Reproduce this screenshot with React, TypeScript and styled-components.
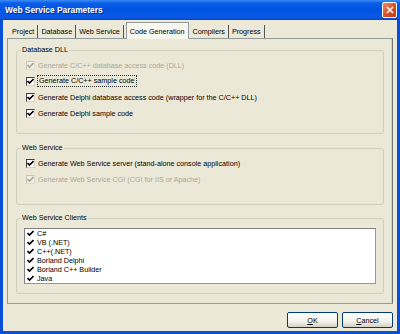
import React from "react";
import styled, { createGlobalStyle } from "styled-components";

const GlobalStyle = createGlobalStyle`
  html, body {
    margin: 0;
    padding: 0;
    background: #ece9d8;
  }
  body {
    font-family: "Liberation Sans", Arial, sans-serif;
    font-size: 7.2px;
    color: #000;
  }
`;

const Window = styled.div`
  width: 400px;
  height: 334px;
  display: flex;
  flex-direction: column;
  background: #0a4fd8;
  overflow: hidden;
`;

const TitleBar = styled.div`
  height: 20px;
  flex: none;
  display: flex;
  align-items: center;
  justify-content: space-between;
  padding: 0 3px 0 5px;
  background: linear-gradient(#3d8cf6 0%, #0b5ee8 15%, #0053e0 50%, #0a5ae6 85%, #0846c6 100%);
`;

const Title = styled.span`
  color: #fff;
  font-weight: bold;
  font-size: 8.4px;
  text-shadow: 1px 1px 0 #0a2a80;
`;

const CloseButton = styled.div`
  width: 13px;
  height: 14px;
  border: 1px solid #fff;
  border-radius: 2px;
  background: linear-gradient(135deg, #e88a6c, #d9491f 60%, #c23a16);
  display: flex;
  align-items: center;
  justify-content: center;
`;

const Body = styled.div`
  flex: 1;
  margin: 0 3px 3px 3px;
  background: #ece9d8;
  display: flex;
  flex-direction: column;
  padding: 3px 4px 0 4px;
`;

const TabStrip = styled.div`
  display: flex;
  align-items: flex-end;
  height: 15px;
  padding-left: 2px;
`;

const Tab = styled.div<{ $active?: boolean }>`
  height: ${(p) => (p.$active ? "16px" : "13px")};
  padding: 0 3px;
  display: flex;
  align-items: center;
  white-space: nowrap;
  background: ${(p) => (p.$active ? "#f7f6ef" : "#ece9d8")};
  border: ${(p) => (p.$active ? "1px solid #919b9c" : "none")};
  border-bottom: none;
  border-right: ${(p) => (p.$active ? "1px solid #919b9c" : "1px solid #555")};
  margin-bottom: ${(p) => (p.$active ? "-1px" : "0")};
  position: relative;
  z-index: ${(p) => (p.$active ? 1 : 0)};
  margin-left: ${(p) => (p.$active ? "2px" : "0")};
  margin-right: ${(p) => (p.$active ? "1px" : "0")};
`;

const Page = styled.div`
  box-sizing: border-box;
  height: 266px;
  border: 1px solid #919b9c;
  border-right-color: #6f7678;
  box-shadow: inset -1px 0 0 #d6d3c6;
  background: #ebe8d7;
  padding: 6px 8px 0 8px;
  display: flex;
  flex-direction: column;
`;

const Group = styled.fieldset<{ $gap: number; $bottom: number }>`
  margin: 0 0 ${(p) => p.$gap}px 0;
  padding: 0 0 ${(p) => p.$bottom}px 0;
  border: 1px solid #d0d0bf;
  border-radius: 3px;
  min-width: 0;
`;

const Legend = styled.legend`
  margin-left: 4px;
  padding: 0 1px;
  line-height: 10px;
  font-size: 7.2px;
  color: #000;
`;

const Rows = styled.div`
  padding: 2px 0 0 9px;
  display: flex;
  flex-direction: column;
`;

const Row = styled.div<{ $disabled?: boolean }>`
  height: 16px;
  display: flex;
  align-items: center;
  gap: 3px;
  white-space: nowrap;
  color: ${(p) => (p.$disabled ? "#aca899" : "#000")};
`;

const Focus = styled.span`
  outline: 1px dotted #333;
  outline-offset: 0px;
  padding: 0 1px;
  line-height: 10px;
`;

const Box = styled.span<{ $disabled?: boolean }>`
  width: 9px;
  height: 9px;
  box-sizing: border-box;
  flex: none;
  background: ${(p) => (p.$disabled ? "#f1efe2" : "#fff")};
  border: 1px solid ${(p) => (p.$disabled ? "#c9c7ba" : "#404040")};
  border-right-color: ${(p) => (p.$disabled ? "#e0ddd0" : "#d4d0c8")};
  border-bottom-color: ${(p) => (p.$disabled ? "#e0ddd0" : "#d4d0c8")};
  display: flex;
  align-items: center;
  justify-content: center;
`;

const ListWrap = styled.div`
  padding: 5px 7px 0 7px;
`;

const ListBox = styled.div`
  height: 54px;
  background: #fff;
  border: 1px solid #7f9db9;
  border-top-color: #808080;
  border-left-color: #808080;
  padding-left: 2px;
  display: flex;
  flex-direction: column;
`;

const ListItem = styled.div`
  height: 9px;
  display: flex;
  align-items: center;
  gap: 3px;
  line-height: 9px;
  white-space: nowrap;
`;

const SmallBox = styled.span`
  width: 7px;
  height: 7px;
  flex: none;
  background: #fff;
  display: flex;
  align-items: center;
  justify-content: center;
`;

const ButtonRow = styled.div`
  display: flex;
  justify-content: flex-end;
  gap: 4px;
  padding-top: 8px;
`;

const Button = styled.div`
  width: 51px;
  height: 16px;
  box-sizing: border-box;
  border: 1px solid #003c74;
  border-radius: 2px;
  background: linear-gradient(#ffffff, #f3f2ea 60%, #d6d0c5);
  display: flex;
  align-items: center;
  justify-content: center;
  u {
    text-decoration: underline;
  }
`;

const Check = ({ color = "#000", size = 7 }: { color?: string; size?: number }) => (
  <svg width={size} height={size} viewBox="0 0 7 7">
    <path d="M0.5 3 L2.5 5 L6.5 1" stroke={color} strokeWidth="1.6" fill="none" />
  </svg>
);

const CheckRow = ({
  label,
  disabled,
  focused,
}: {
  label: string;
  disabled?: boolean;
  focused?: boolean;
}) => (
  <Row $disabled={disabled}>
    <Box $disabled={disabled}>
      <Check color={disabled ? "#aca899" : "#000"} />
    </Box>
    {focused ? <Focus>{label}</Focus> : <span>{label}</span>}
  </Row>
);

const clients = ["C#", "VB (.NET)", "C++(.NET)", "Borland Delphi", "Borland C++ Builder", "Java"];
const tabs = ["Project", "Database", "Web Service", "Code Generation", "Compilers", "Progress"];

export default function App() {
  return (
    <>
      <GlobalStyle />
      <Window>
        <TitleBar>
          <Title>Web Service Parameters</Title>
          <CloseButton>
            <svg width="8" height="8" viewBox="0 0 8 8">
              <path d="M1 1 L7 7 M7 1 L1 7" stroke="#fff" strokeWidth="1.6" />
            </svg>
          </CloseButton>
        </TitleBar>
        <Body>
          <TabStrip>
            {tabs.map((t) => (
              <Tab key={t} $active={t === "Code Generation"}>
                {t}
              </Tab>
            ))}
          </TabStrip>
          <Page>
            <Group $gap={9} $bottom={12}>
              <Legend>Database DLL</Legend>
              <Rows>
                <CheckRow label="Generate C/C++ database access code (DLL)" disabled />
                <CheckRow label="Generate C/C++ sample code" focused />
                <CheckRow label="Generate Delphi database access code (wrapper for the C/C++ DLL)" />
                <CheckRow label="Generate Delphi sample code" />
              </Rows>
            </Group>
            <Group $gap={8} $bottom={17}>
              <Legend>Web Service</Legend>
              <Rows>
                <CheckRow label="Generate Web Service server  (stand-alone console application)" />
                <CheckRow label="Generate Web Service CGI (CGI for IIS or Apache)" disabled />
              </Rows>
            </Group>
            <Group $gap={0} $bottom={9}>
              <Legend>Web Service Clients</Legend>
              <ListWrap>
                <ListBox>
                  {clients.map((c) => (
                    <ListItem key={c}>
                      <SmallBox>
                        <Check size={7} />
                      </SmallBox>
                      {c}
                    </ListItem>
                  ))}
                </ListBox>
              </ListWrap>
            </Group>
          </Page>
          <ButtonRow>
            <Button>
              <u>O</u>K
            </Button>
            <Button>
              <u>C</u>ancel
            </Button>
          </ButtonRow>
        </Body>
      </Window>
    </>
  );
}
